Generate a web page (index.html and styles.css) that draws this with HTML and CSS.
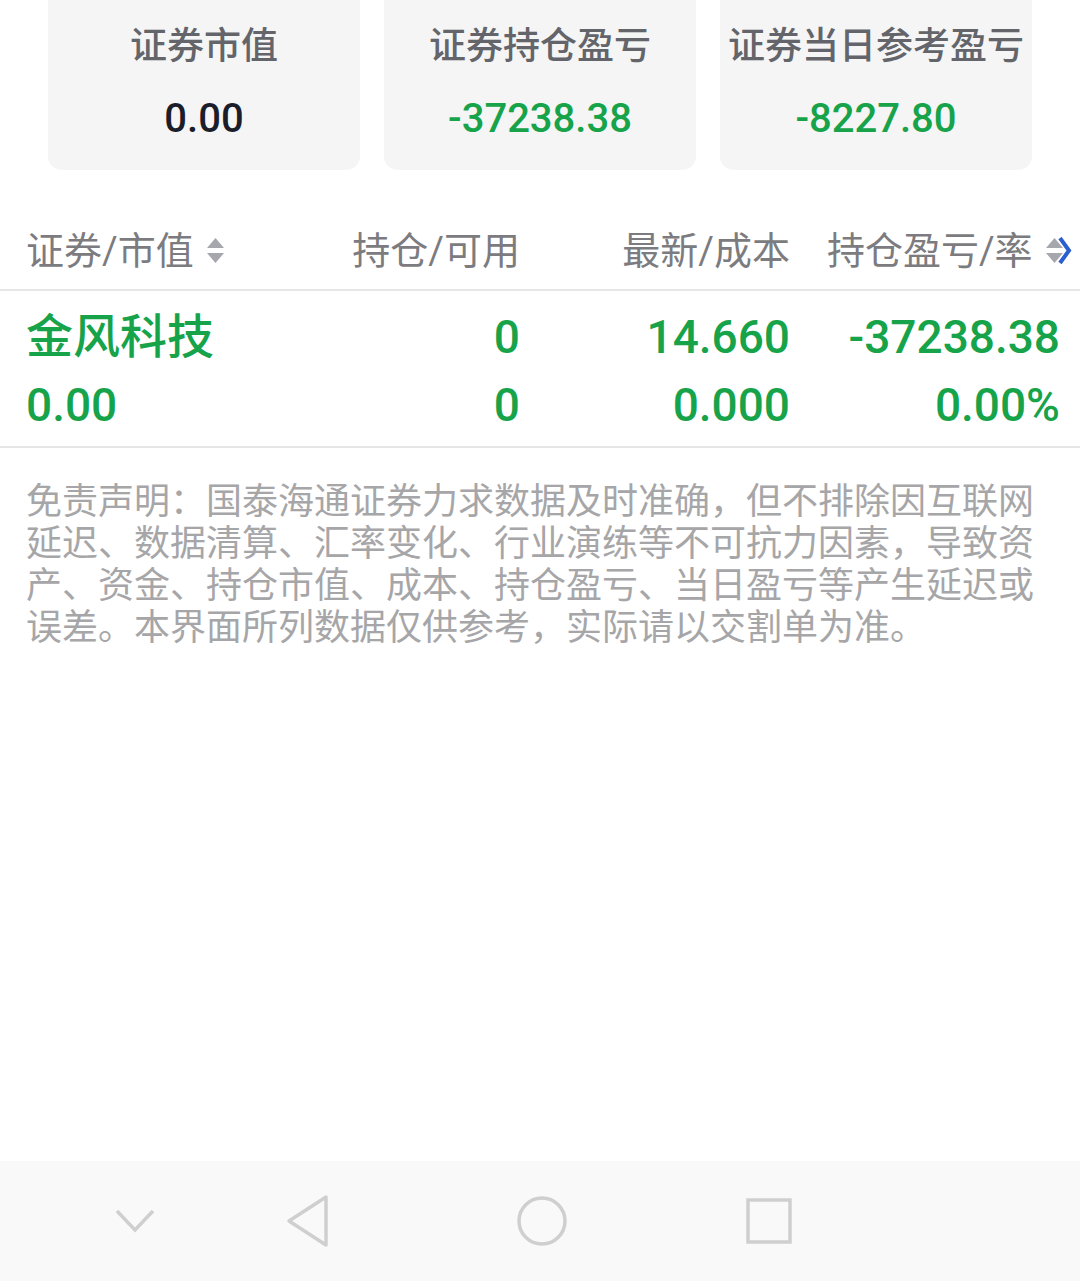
FILE: index.html
```html
<!DOCTYPE html>
<html>
<head>
    <title>持仓</title>
    <meta name="viewport" content="width=device-width, initial-scale=1.0">
    <link rel="stylesheet" href="styles.css">
</head>
<body>
    <div class="page">
        <div class="summary">
            <div class="card">
                <div class="card-title">证券市值</div>
                <div class="card-value">0.00</div>
            </div>
            <div class="card">
                <div class="card-title">证券持仓盈亏</div>
                <div class="card-value down">-37238.38</div>
            </div>
            <div class="card">
                <div class="card-title">证券当日参考盈亏</div>
                <div class="card-value down">-8227.80</div>
            </div>
        </div>

        <div class="table-head">
            <div class="col col-name">证券/市值
                <svg class="sort" width="17" height="26" viewBox="0 0 17 26">
                    <path d="M8.5 0 L17 10 L0 10 Z" fill="#a6a7ad"/>
                    <path d="M0 15 L17 15 L8.5 25 Z" fill="#a6a7ad"/>
                </svg>
            </div>
            <div class="col">持仓/可用</div>
            <div class="col">最新/成本</div>
            <div class="col col-last">持仓盈亏/率
                <svg class="sort more" width="26" height="28" viewBox="0 0 26 28">
                    <path d="M8.5 1 L17 11 L0 11 Z" fill="#a6a7ad"/>
                    <path d="M0 16 L17 16 L8.5 26 Z" fill="#a6a7ad"/>
                    <path d="M14 1 L23 13.5 L14 26" fill="none" stroke="#2b5fcf" stroke-width="4"/>
                </svg>
            </div>
        </div>

        <div class="table-body">
            <div class="row">
                <div class="col col-name stock">金风科技</div>
                <div class="col">0</div>
                <div class="col">14.660</div>
                <div class="col">-37238.38</div>
            </div>
            <div class="row">
                <div class="col col-name">0.00</div>
                <div class="col">0</div>
                <div class="col">0.000</div>
                <div class="col">0.00%</div>
            </div>
        </div>

        <p class="disclaimer">免责声明：国泰海通证券力求数据及时准确，但不排除因互联网延迟、数据清算、汇率变化、行业演练等不可抗力因素，导致资产、资金、持仓市值、成本、持仓盈亏、当日盈亏等产生延迟或误差。本界面所列数据仅供参考，实际请以交割单为准。</p>

        <div class="navbar">
            <svg width="40" height="26" viewBox="0 0 40 26">
                <path d="M2 3 L20 22 L38 3" fill="none" stroke="#cfcfcf" stroke-width="3.5"/>
            </svg>
            <svg width="46" height="54" viewBox="0 0 46 54">
                <path d="M41 3 L41 51 L4 27 Z" fill="none" stroke="#cfcfcf" stroke-width="3.5" stroke-linejoin="round"/>
            </svg>
            <svg width="54" height="54" viewBox="0 0 54 54">
                <circle cx="27" cy="27" r="23" fill="none" stroke="#cfcfcf" stroke-width="3.5"/>
            </svg>
            <svg width="48" height="48" viewBox="0 0 48 48">
                <rect x="3" y="3" width="42" height="42" fill="none" stroke="#cfcfcf" stroke-width="3.5"/>
            </svg>
        </div>
    </div>
</body>
</html>
```

FILE: styles.css
```css
html, body {
    margin: 0;
    padding: 0;
    background-color: #fff;
}
body {
    font-family: Roboto, "Noto Sans CJK SC", sans-serif;
}
.page {
    display: flex;
    flex-direction: column;
    height: 100vh;
    overflow: hidden;
}
.summary {
    display: flex;
    gap: 24px;
    padding: 0 48px;
    margin-top: -20px;
}
.card {
    flex: 1;
    background-color: #f5f5f5;
    border-radius: 14px;
    padding: 44px 0 28px 0;
    text-align: center;
}
.card-title {
    font-size: 37px;
    line-height: 46px;
    color: #63656b;
    font-weight: 500;
}
.card-value {
    margin-top: 26px;
    font-size: 40px;
    line-height: 46px;
    font-weight: 500;
    color: #1b1d2a;
}
.down {
    color: #16a34a;
}
.table-head, .row {
    display: grid;
    grid-template-columns: 268px 226px 270px 270px;
    padding: 0 20px 0 26px;
}
.table-head {
    margin-top: 40px;
    height: 75px;
    padding-bottom: 4px;
    align-items: center;
    border-bottom: 2px solid #e6e6e6;
    font-size: 38px;
    color: #7c7c80;
}
.col {
    text-align: right;
    white-space: nowrap;
}
.col-name {
    text-align: left;
}
.sort {
    vertical-align: middle;
    margin-left: 4px;
    position: relative;
    top: -3px;
}
.col-last {
    margin-right: -12px;
}
.table-body {
    padding: 12px 0 7px 0;
    border-bottom: 2px solid #e6e6e6;
}
.row {
    height: 68px;
    line-height: 68px;
    font-size: 46px;
    font-weight: 500;
    color: #16a34a;
}
.stock {
    font-size: 47px;
}
.disclaimer {
    margin: 29px 0 0 0;
    padding: 0 26px;
    font-family: "Noto Sans CJK SC", sans-serif;
    font-size: 36px;
    line-height: 42px;
    color: #a6a6a8;
}
.navbar {
    margin-top: auto;
    height: 120px;
    flex-shrink: 0;
    background-color: #f9f9f9;
    display: flex;
    align-items: center;
    padding-left: 115px;
}
.navbar svg:nth-child(1) { margin-right: 130px; }
.navbar svg:nth-child(2) { margin-right: 184px; }
.navbar svg:nth-child(3) { margin-right: 176px; }
```
